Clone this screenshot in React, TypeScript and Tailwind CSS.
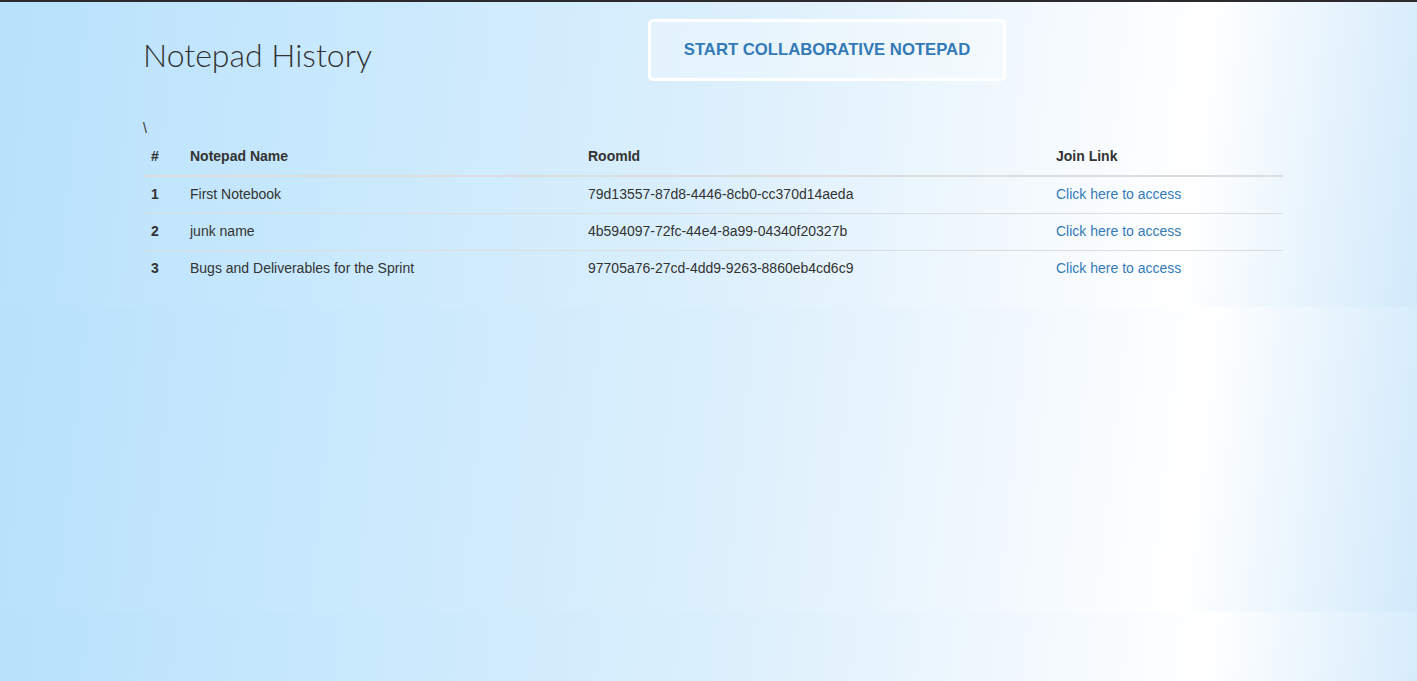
import React from 'react';

const notepads = [
  { id: 1, name: 'First Notebook', roomId: '79d13557-87d8-4446-8cb0-cc370d14aeda' },
  { id: 2, name: 'junk name', roomId: '4b594097-72fc-44e4-8a99-04340f20327b' },
  { id: 3, name: 'Bugs and Deliverables for the Sprint', roomId: '97705a76-27cd-4dd9-9263-8860eb4cd6c9' },
];

const App = () => {
  return (
    <div
      className="min-h-[681px] border-t-2 border-[#2d2a2e] bg-[linear-gradient(96deg,#b8e1fc_0%,#c9e9fd_25%,#dbeffc_50%,#f3f9fe_72%,#ffffff_83.5%,#d2eafb_100%)] bg-[length:100%_305px] bg-repeat-y font-['Liberation_Sans',Arial,sans-serif] text-[14px] leading-5 text-[#333]"
    >
      <div className="ml-[143px] w-[1140px]">
        {/* Header row */}
        <div className="grid grid-cols-[505px_auto] items-start pt-[17px]">
          <h1 className="mt-[18px] font-['Lato',sans-serif] text-[32px] font-light leading-[36px] text-[#333]">
            Notepad History
          </h1>
          <button className="flex h-[62px] w-[358px] items-center justify-center rounded-[5px] border-[3px] border-white bg-white/30 text-[16.7px] font-bold uppercase text-[#337ab7]">
            Start Collaborative Notepad
          </button>
        </div>

        <div className="mt-[37px] h-5">\</div>

        {/* History table */}
        <table className="mt-[1px] w-[1140px] table-fixed border-collapse">
          <thead>
            <tr>
              <th className="w-[39px] border-b-2 border-[#ddd] px-2 pt-[7px] pb-[9px] text-left font-bold">#</th>
              <th className="w-[398px] border-b-2 border-[#ddd] px-2 pt-[7px] pb-[9px] text-left font-bold">Notepad Name</th>
              <th className="w-[468px] border-b-2 border-[#ddd] px-2 pt-[7px] pb-[9px] text-left font-bold">RoomId</th>
              <th className="w-[235px] border-b-2 border-[#ddd] px-2 pt-[7px] pb-[9px] text-left font-bold">Join Link</th>
            </tr>
          </thead>
          <tbody>
            {notepads.map((n) => (
              <tr key={n.id}>
                <td className="border-t border-[#ddd] px-2 pt-[7px] pb-[9px] font-bold">{n.id}</td>
                <td className="border-t border-[#ddd] px-2 pt-[7px] pb-[9px]">{n.name}</td>
                <td className="border-t border-[#ddd] px-2 pt-[7px] pb-[9px]">{n.roomId}</td>
                <td className="border-t border-[#ddd] px-2 pt-[7px] pb-[9px]">
                  <a href="#" className="text-[#337ab7]">Click here to access</a>
                </td>
              </tr>
            ))}
          </tbody>
        </table>
      </div>
    </div>
  );
};

export default App;
